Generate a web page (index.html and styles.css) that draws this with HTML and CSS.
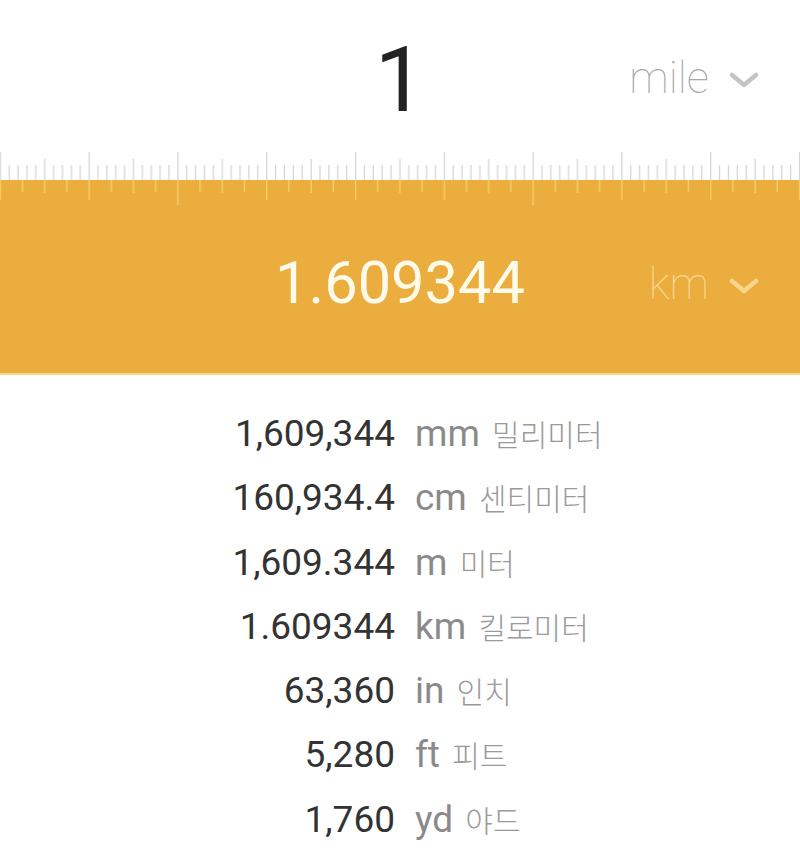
FILE: index.html
```html
<!DOCTYPE html>
<html lang="ko">
<head>
<meta charset="utf-8">
<link rel="stylesheet" href="styles.css">
</head>
<body>
<div class="app">
  <section class="source">
    <div class="value-row">
      <div class="spacer"></div>
      <div class="big-number">1</div>
      <div class="unit-pick">
        <span class="unit-name">mile</span>
        <svg class="chev" width="30" height="18" viewBox="0 0 30 18"><polyline points="3,4 15,14 27,4" fill="none" stroke="#c4c4c4" stroke-width="4.5" stroke-linecap="round" stroke-linejoin="round"/></svg>
      </div>
    </div>
    <svg class="ruler-top" width="800" height="28" viewBox="0 0 800 28">
      <defs>
        <pattern id="topTicks" patternUnits="userSpaceOnUse" x="-0.3" y="0" width="88.8" height="28">
          <g stroke="#d2d2d2" stroke-width="1.2">
            <line x1="0.6" y1="0" x2="0.6" y2="28"/>
            <line x1="9.48" y1="13" x2="9.48" y2="28"/>
            <line x1="18.36" y1="13" x2="18.36" y2="28"/>
            <line x1="27.24" y1="13" x2="27.24" y2="28"/>
            <line x1="36.12" y1="13" x2="36.12" y2="28"/>
            <line x1="45" y1="7" x2="45" y2="28"/>
            <line x1="53.88" y1="13" x2="53.88" y2="28"/>
            <line x1="62.76" y1="13" x2="62.76" y2="28"/>
            <line x1="71.64" y1="13" x2="71.64" y2="28"/>
            <line x1="80.52" y1="13" x2="80.52" y2="28"/>
          </g>
        </pattern>
      </defs>
      <rect x="0" y="0" width="800" height="28" fill="url(#topTicks)"/>
    </svg>
  </section>
  <section class="target">
    <svg class="ruler-bottom" width="800" height="26" viewBox="0 0 800 26">
      <defs>
        <pattern id="botTicks" patternUnits="userSpaceOnUse" x="-0.3" y="0" width="355.2" height="26">
          <g stroke="#f9d06c" stroke-width="1.3">
            <line x1="0.6" y1="0" x2="0.6" y2="20"/>
            <line x1="89.4" y1="0" x2="89.4" y2="20"/>
            <line x1="178.2" y1="0" x2="178.2" y2="25"/>
            <line x1="267" y1="0" x2="267" y2="20"/>
          </g>
        </pattern>
        <pattern id="botMinor" patternUnits="userSpaceOnUse" x="-0.3" y="0" width="88.8" height="26">
          <g stroke="#f9d06c" stroke-width="1.3">
            <line x1="22.8" y1="0" x2="22.8" y2="12"/>
            <line x1="45" y1="0" x2="45" y2="13"/>
            <line x1="67.2" y1="0" x2="67.2" y2="12"/>
          </g>
        </pattern>
      </defs>
      <rect x="0" y="0" width="800" height="26" fill="url(#botTicks)"/>
      <rect x="0" y="0" width="800" height="26" fill="url(#botMinor)"/>
    </svg>
    <div class="value-row result-row">
      <div class="spacer"></div>
      <div class="result-number">1.609344</div>
      <div class="unit-pick result-unit">
        <span class="unit-name">km</span>
        <svg class="chev" width="30" height="18" viewBox="0 0 30 18"><polyline points="3,4 15,14 27,4" fill="none" stroke="#f6d68c" stroke-width="4.5" stroke-linecap="round" stroke-linejoin="round"/></svg>
      </div>
    </div>
  </section>
  <section class="list">
    <div class="row"><span class="num">1,609,344</span><span class="unit">mm <span class="ko">밀리미터</span></span></div>
    <div class="row"><span class="num">160,934.4</span><span class="unit">cm <span class="ko">센티미터</span></span></div>
    <div class="row"><span class="num">1,609.344</span><span class="unit">m <span class="ko">미터</span></span></div>
    <div class="row"><span class="num">1.609344</span><span class="unit">km <span class="ko">킬로미터</span></span></div>
    <div class="row"><span class="num">63,360</span><span class="unit">in <span class="ko">인치</span></span></div>
    <div class="row"><span class="num">5,280</span><span class="unit">ft <span class="ko">피트</span></span></div>
    <div class="row"><span class="num">1,760</span><span class="unit">yd <span class="ko">야드</span></span></div>
  </section>
</div>
</body>
</html>
```
FILE: styles.css
```css
html, body {
  margin: 0;
  padding: 0;
  background: #ffffff;
}
body {
  width: 800px;
  height: 856px;
  overflow: hidden;
  font-family: Roboto, "Noto Sans CJK KR", sans-serif;
}
.app {
  width: 800px;
}
.source {
  background: #ffffff;
}
.value-row {
  display: grid;
  grid-template-columns: 1fr auto 1fr;
  align-items: start;
}
.source .value-row {
  height: 152px;
}
.big-number {
  margin-top: 36px;
  font-size: 90px;
  line-height: 90px;
  color: #222222;
  font-weight: 400;
}
.unit-pick {
  justify-self: end;
  display: flex;
  align-items: center;
  gap: 20px;
  padding-right: 41px;
}
.source .unit-pick {
  margin-top: 57px;
}
.unit-name {
  font-size: 44px;
  line-height: 43px;
  font-weight: 100;
  color: #a8a8a8;
}
.chev {
  display: block;
  margin-top: 3px;
}
.ruler-top, .ruler-bottom {
  display: block;
}
.target {
  background: #ebad3e;
  border-bottom: 2px solid #f4d68c;
  height: 193px;
}
.result-row {
  height: 167px;
}
.result-number {
  margin-top: 48px;
  font-size: 59.5px;
  line-height: 59.5px;
  color: #fffbea;
  font-weight: 400;
}
.result-unit {
  margin-top: 56px;
}
.result-unit .unit-name {
  font-size: 44px;
  line-height: 44px;
  color: #f8d996;
}
.list {
  padding-top: 27px;
}
.row {
  display: grid;
  grid-template-columns: 395px 1fr;
  column-gap: 20px;
  height: 64.3px;
  line-height: 64.3px;
  font-size: 37px;
}
.num {
  text-align: right;
  color: #333333;
}
.unit {
  color: #8a8a8a;
  white-space: nowrap;
}
.ko {
  font-family: "Noto Sans CJK KR", sans-serif;
  font-size: 30px;
  line-height: 1;
  font-weight: 300;
  color: #9a9a9a;
  margin-left: 3px;
}
```
